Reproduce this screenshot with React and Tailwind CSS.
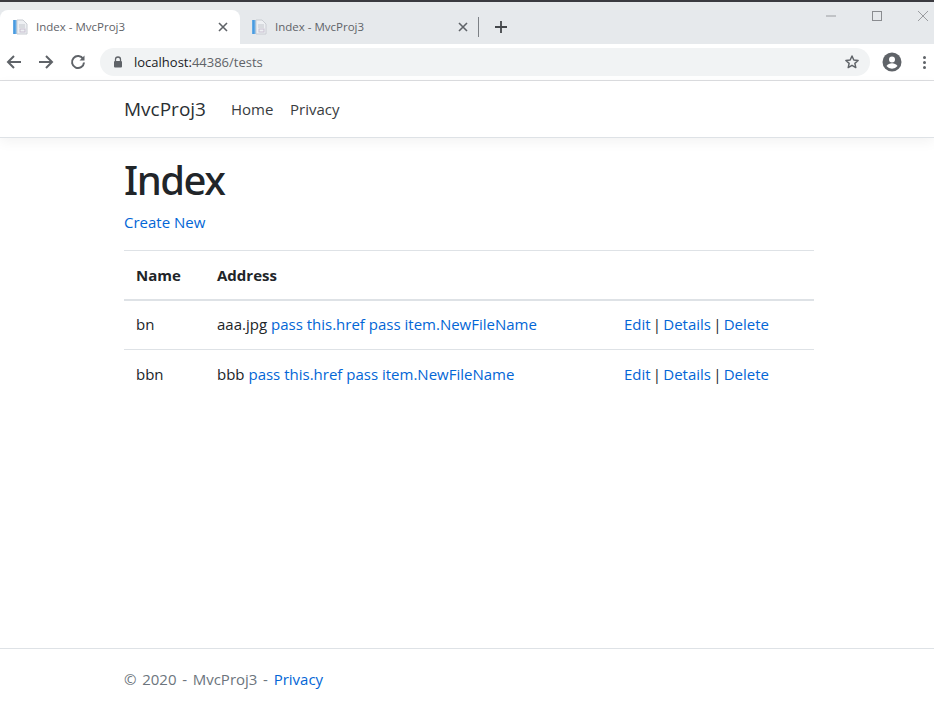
import React from 'react'

const font = "font-['Open_Sans','Noto_Sans',sans-serif]"

const PageIcon = () => (
  <svg width="16" height="16" viewBox="0 0 16 16" className="shrink-0">
    <rect x="1" y="1" width="4" height="14" fill="#7db8ea" />
    <rect x="1.5" y="1" width="2" height="14" fill="#4a9be0" />
    <path d="M5 1h6l4 4v10H5z" fill="#eef0f3" stroke="#c9ccd2" strokeWidth="1" />
    <path d="M7 6h6M7 8h6" stroke="#c3c6cc" />
    <rect x="8" y="10" width="5" height="3" fill="none" stroke="#c8bfd0" />
  </svg>
)

const CloseIcon = () => (
  <svg width="10" height="10" viewBox="0 0 10 10" className="shrink-0">
    <path d="M1 1l8 8M9 1l-8 8" stroke="#5f6368" strokeWidth="1.6" />
  </svg>
)

const Tab = ({ active }) => (
  <div className={active
    ? 'flex items-center w-[240px] h-[34px] pl-[12px] pr-[12px] bg-white rounded-t-[8px]'
    : 'flex items-center w-[239px] h-[34px] pl-[11px] pr-[11px]'}>
    <PageIcon />
    <span className="ml-[8px] text-[11.5px] text-[#5f6368] flex-1 font-['Open_Sans',sans-serif]">Index - MvcProj3</span>
    <CloseIcon />
  </div>
)

const ToolbarIcon = ({ children, className }) => (
  <svg width="18" height="18" viewBox="0 0 18 18" fill="none" className={className}>{children}</svg>
)

const Actions = () => (
  <span className="text-[#212529] [word-spacing:-1.7px]">
    <a className="text-[#0366d6]">Edit</a> | <a className="text-[#0366d6]">Details</a> | <a className="text-[#0366d6]">Delete</a>
  </span>
)

const Row = ({ name, address }) => (
  <div className="flex items-center h-[49px] border-b border-[#dee2e6] px-[12px] pb-[2px] last:border-b-0 last:pb-0">
    <div className="w-[81px]">{name}</div>
    <div className="w-[407px]">
      {address} <a className="text-[#0366d6]">pass this.href pass item.NewFileName</a>
    </div>
    <Actions />
  </div>
)

const App = () => {
  return (
    <div className={`${font} flex flex-col h-[702px] w-[934px] overflow-hidden bg-white text-[15px] text-[#212529]`}>
      <div className="h-[44px] bg-[#e6e9ec] border-t-2 border-[#3a3a40] flex items-end relative">
        <Tab active />
        <Tab />
        <div className="w-px h-[20px] bg-[#7c8085] mb-[7px] -ml-[1px]"></div>
        <svg width="14" height="14" viewBox="0 0 14 14" className="ml-[15px] mb-[10px]">
          <path d="M7 1v12M1 7h12" stroke="#44474b" strokeWidth="1.8" />
        </svg>
        <div className="absolute right-0 top-0 flex items-center">
          <svg width="46" height="28" viewBox="0 0 46 28"><path d="M18 14h10" stroke="#9a9ca0" /></svg>
          <svg width="46" height="28" viewBox="0 0 46 28"><rect x="18.5" y="9.5" width="9" height="9" fill="none" stroke="#8a8c90" /></svg>
          <svg width="46" height="28" viewBox="0 0 46 28" className="-mr-[12px]"><path d="M18 9l10 10M28 9L18 19" stroke="#9a9ca0" /></svg>
        </div>
      </div>

      <div className="h-[37px] flex items-center border-b border-[#dcdde0] bg-white">
        <ToolbarIcon className="ml-[5px]">
          <path d="M16 9H3M9 3L3 9l6 6" stroke="#5f6368" strokeWidth="2" />
        </ToolbarIcon>
        <ToolbarIcon className="ml-[14px]">
          <path d="M2 9h13M9 3l6 6-6 6" stroke="#5f6368" strokeWidth="2" />
        </ToolbarIcon>
        <ToolbarIcon className="ml-[14px]">
          <path d="M14.2 6A6 6 0 1 0 15 9.5" stroke="#5f6368" strokeWidth="2" />
          <path d="M15.5 2.5v5h-5z" fill="#5f6368" />
        </ToolbarIcon>
        <div className="ml-[13px] w-[770px] h-[28px] rounded-full bg-[#f1f3f4] flex items-center pl-[13px] pr-[10px]">
          <svg width="10" height="12" viewBox="0 0 10 12" className="shrink-0">
            <path d="M2.5 5V3.5a2.5 2.5 0 0 1 5 0V5" fill="none" stroke="#5f6368" strokeWidth="1.3" />
            <rect x="1" y="5" width="8" height="6.5" rx="1" fill="#5f6368" />
          </svg>
          <span className="ml-[11px] pt-[2px] text-[13px] text-[#5f6368] flex-1 font-['Open_Sans',sans-serif]">
            <span className="text-[#202124]">localhost:</span>44386/tests
          </span>
          <svg width="16" height="16" viewBox="0 0 24 24" fill="none" className="shrink-0">
            <path d="M12 3l2.7 6 6.5.7-4.9 4.3 1.4 6.4L12 17l-5.7 3.4 1.4-6.4-4.9-4.3 6.5-.7z" stroke="#5f6368" strokeWidth="2.2" strokeLinejoin="round" />
          </svg>
        </div>
        <svg width="20" height="20" viewBox="0 0 20 20" className="ml-[12px] shrink-0">
          <circle cx="10" cy="10" r="9.5" fill="#5f6368" />
          <circle cx="10" cy="7.5" r="3" fill="white" />
          <path d="M4.5 14c1.2-2 3.4-2.8 5.5-2.8s4.3.8 5.5 2.8a7 7 0 0 1-11 0z" fill="white" />
        </svg>
        <div className="ml-[21px] flex flex-col gap-[2px]">
          <div className="w-[3px] h-[3px] rounded-full bg-[#5f6368]"></div>
          <div className="w-[3px] h-[3px] rounded-full bg-[#5f6368]"></div>
          <div className="w-[3px] h-[3px] rounded-full bg-[#5f6368]"></div>
        </div>
      </div>

      <div className="h-[57px] shrink-0 flex items-center pl-[124px] border-b border-[#dee2e6] shadow-[0_4px_12px_rgba(0,0,0,0.05)]">
        <span className="text-[19px] w-[107px] text-[#2b2f33]">MvcProj3</span>
        <span className="text-[#393c40] w-[59px]">Home</span>
        <span className="text-[#393c40]">Privacy</span>
      </div>

      <div className="flex-1 pl-[124px] w-[814px]">
        <h1 className="text-[40px] tracking-[-1.5px] leading-[48px] mt-[18px] font-medium text-[#212529] font-['Noto_Sans',sans-serif]">Index</h1>
        <a className="block mt-[7px] text-[#0366d6] leading-[22px]">Create New</a>
        <div className="mt-[17px] border-t border-[#dee2e6]">
          <div className="flex items-center h-[50px] border-b-2 border-[#dee2e6] px-[12px] font-bold text-[#212529]">
            <div className="w-[81px]">Name</div>
            <div>Address</div>
          </div>
          <Row name="bn" address="aaa.jpg" />
          <Row name="bbn" address="bbb" />
        </div>
      </div>

      <div className="h-[54px] shrink-0 border-t border-[#dee2e6] flex items-center pt-[8px] pl-[124px] text-[#6c757d]">
        <span><span className="[word-spacing:1.8px]">© 2020 - MvcProj3 - </span><a className="text-[#0366d6]">Privacy</a></span>
      </div>
    </div>
  )
}

export default App
